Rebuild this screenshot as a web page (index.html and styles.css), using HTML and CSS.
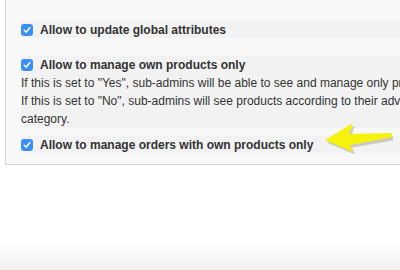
FILE: index.html
```html
<!DOCTYPE html>
<html>
<head>
<meta charset="utf-8">
<link rel="stylesheet" href="styles.css">
</head>
<body>
<div class="page">
  <div class="panel">
    <div class="block block-first">
      <label class="opt">
        <span class="cb"><svg viewBox="0 0 12 12" width="12" height="12"><path d="M3.3 6.3 L5.2 8.2 L8.8 3.8" fill="none" stroke="#fff" stroke-width="1.6" stroke-linecap="round" stroke-linejoin="round"/></svg></span>
        <span class="lbl">Allow to update global attributes</span>
      </label>
    </div>
    <div class="block block-mid">
      <label class="opt">
        <span class="cb"><svg viewBox="0 0 12 12" width="12" height="12"><path d="M3.3 6.3 L5.2 8.2 L8.8 3.8" fill="none" stroke="#fff" stroke-width="1.6" stroke-linecap="round" stroke-linejoin="round"/></svg></span>
        <span class="lbl">Allow to manage own products only</span>
      </label>
      <p class="desc">If this is set to "Yes", sub-admins will be able to see and manage only products they created.<br>If this is set to "No", sub-admins will see products according to their advanced permissions by<br>category.</p>
    </div>
    <div class="block block-last">
      <label class="opt">
        <span class="cb"><svg viewBox="0 0 12 12" width="12" height="12"><path d="M3.3 6.3 L5.2 8.2 L8.8 3.8" fill="none" stroke="#fff" stroke-width="1.6" stroke-linecap="round" stroke-linejoin="round"/></svg></span>
        <span class="lbl">Allow to manage orders with own products only</span>
      </label>
    </div>
  </div>
  <div class="spacer"></div>
  <div class="footer"></div>
  <svg class="arrow" viewBox="0 0 80 40" width="80" height="40">
    <polygon points="6,23 34,6 30,17 72,17 72,21 31,28 34,35" fill="#9a9a7a" opacity="0.45" transform="translate(1,1.5)"/>
    <polygon points="5,22 33,5 29,16 72,15 72,19 30,27 33,34" fill="#f6f20c"/>
  </svg>
</div>
</body>
</html>
```
FILE: styles.css
```css
html, body {
  margin: 0;
  padding: 0;
  background: #ffffff;
}
body {
  font-family: "Liberation Sans", Arial, Helvetica, sans-serif;
  font-size: 12px;
  color: #333333;
  overflow: hidden;
}
.page {
  position: relative;
  width: 400px;
  height: 270px;
  display: flex;
  flex-direction: column;
  overflow: hidden;
}
.panel {
  margin-left: 5px;
  border-left: 1px solid #d8d8d8;
  border-bottom: 1px solid #d8d8d8;
  background: #f8f8f8;
  padding: 21px 0 11px 15px;
  display: flex;
  flex-direction: column;
}
.block {
  background: #f2f2f2;
}
.block-first {
  margin-bottom: 18px;
}
.block-mid {
  margin-bottom: 8px;
}
.opt {
  display: flex;
  align-items: center;
  height: 17px;
  gap: 7px;
  white-space: nowrap;
}
.block-mid .opt {
  height: 18px;
}
.cb {
  width: 12px;
  height: 12px;
  border-radius: 3px;
  background: #3a8ff5;
  display: flex;
  flex: none;
}
.lbl {
  font-weight: bold;
  color: #333333;
}
.desc {
  margin: 0;
  line-height: 18px;
  white-space: nowrap;
  color: #333333;
}
.spacer {
  flex: 1;
}
.footer {
  height: 27px;
  background: linear-gradient(#ffffff, #efefef);
}
.arrow {
  position: absolute;
  left: 320px;
  top: 118px;
}
```
